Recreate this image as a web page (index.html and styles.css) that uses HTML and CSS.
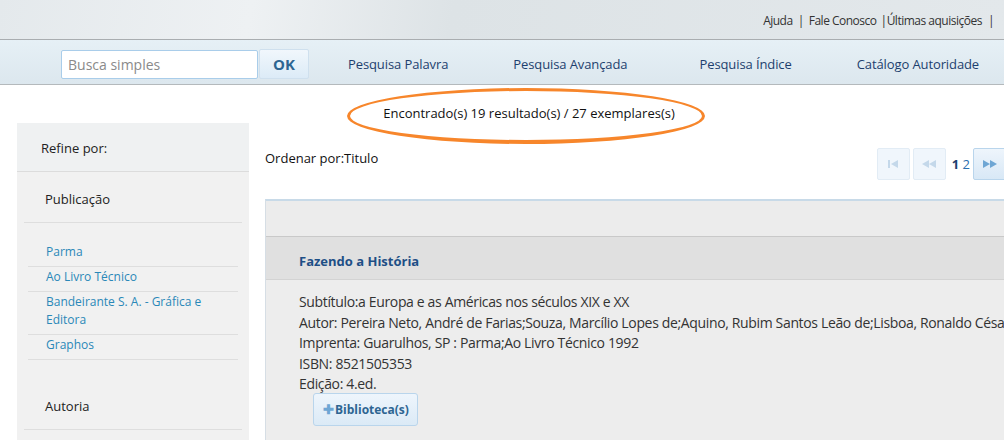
FILE: index.html
```html
<!DOCTYPE html>
<html lang="pt-BR">
<head>
<meta charset="utf-8">
<title>Resultado da pesquisa</title>
<link rel="stylesheet" href="styles.css">
</head>
<body>
<header class="topbar">
  <nav class="toplinks">
    <a href="#">Ajuda</a><span class="sep">|</span><a href="#">Fale Conosco</a><span class="sep tight">|</span><a href="#">Últimas aquisições</a><span class="sep last">|</span>
  </nav>
</header>
<div class="navbar">
  <form class="search">
    <input class="search-input" type="text" placeholder="Busca simples">
    <button class="search-btn" type="button">OK</button>
  </form>
  <a class="navlink nl1" href="#">Pesquisa Palavra</a>
  <a class="navlink nl2" href="#">Pesquisa Avançada</a>
  <a class="navlink nl3" href="#">Pesquisa Índice</a>
  <a class="navlink nl4" href="#">Catálogo Autoridade</a>
</div>
<div class="summary">
  <span class="found">Encontrado(s) 19 resultado(s) / 27 exemplares(s)</span>
  <span class="ellipse"></span>
</div>
<div class="content">
  <aside class="sidebar">
    <div class="refine">Refine por:</div>
    <div class="facet">
      <div class="facet-title">Publicação</div>
      <ul class="facet-list">
        <li><a href="#">Parma</a></li>
        <li><a href="#">Ao Livro Técnico</a></li>
        <li><a href="#">Bandeirante S. A. - Gráfica e Editora</a></li>
        <li><a href="#">Graphos</a></li>
      </ul>
    </div>
    <div class="facet">
      <div class="facet-title">Autoria</div>
    </div>
  </aside>
  <main class="main">
    <div class="toolbar">
      <div class="order">Ordenar por:Titulo</div>
      <div class="pager">
        <span class="pbtn off"><svg width="12" height="10" viewBox="0 0 12 10"><rect x="1" y="1" width="2" height="8" fill="#c4d8ea"/><path d="M11 1 L4 5 L11 9 Z" fill="#c4d8ea"/></svg></span>
        <span class="pbtn off"><svg width="16" height="10" viewBox="0 0 16 10"><path d="M8 1 L1 5 L8 9 Z M15 1 L8 5 L15 9 Z" fill="#c4d8ea"/></svg></span>
        <span class="pages"><b>1</b> <a href="#">2</a></span>
        <span class="pbtn on"><svg width="16" height="10" viewBox="0 0 16 10"><path d="M1 1 L8 5 L1 9 Z M8 1 L15 5 L8 9 Z" fill="#6ea6d4"/></svg></span>
      </div>
    </div>
    <section class="results">
      <div class="results-head"></div>
      <article class="record">
        <h3 class="record-title">Fazendo a História</h3>
        <div class="record-body">
          <p>Subtítulo:a Europa e as Américas nos séculos XIX e XX</p>
          <p>Autor: Pereira Neto, André de Farias;Souza, Marcílio Lopes de;Aquino, Rubim Santos Leão de;Lisboa, Ronaldo César</p>
          <p>Imprenta: Guarulhos, SP : Parma;Ao Livro Técnico 1992</p>
          <p>ISBN: 8521505353</p>
          <p>Edição: 4.ed.</p>
          <button class="lib-btn" type="button"><span class="plus">✚</span>Biblioteca(s)</button>
        </div>
      </article>
    </section>
  </main>
</div>
</body>
</html>
```

FILE: styles.css
```css
* { box-sizing: border-box; }
html, body { margin: 0; padding: 0; }
body {
  font-family: "Open Sans", "Noto Sans", sans-serif;
  color: #222;
  background: #fff;
  width: 1004px;
  height: 440px;
  overflow: hidden;
}
a { text-decoration: none; }

.topbar {
  height: 40px;
  background: linear-gradient(100deg, #e4e9ec 0%, #eef1f3 25%, #dde3e6 45%, #e3e8eb 100%);
  border-bottom: 1px solid #a9adb0;
  display: flex;
  justify-content: flex-end;
  align-items: center;
  padding-right: 10px;
}
.toplinks {
  font-size: 12px;
  letter-spacing: -0.5px;
  color: #333;
  display: flex;
  align-items: center;
  padding-top: 2px;
}
.toplinks a { color: #333; }
.toplinks .sep { margin: 0 5px; }
.toplinks .sep.tight { margin: 0 0 0 4px; }
.toplinks .sep.last { margin: 0 0 0 6px; }

.navbar {
  height: 45px;
  background: linear-gradient(#e6f0f6, #dce7ee);
  border-bottom: 1px solid #b4b9bc;
  display: flex;
  align-items: center;
  padding-left: 61px;
  padding-top: 4px;
}
.search { display: flex; align-items: center; }
.search-input {
  width: 197px;
  height: 29px;
  border: 1px solid #a9cdea;
  border-radius: 2px;
  background: #fff;
  font-family: inherit;
  font-size: 14px;
  padding: 0 6px;
  color: #333;
}
.search-input::placeholder { color: #8a8a8a; }
.search-btn {
  width: 50px;
  height: 30px;
  margin-left: 1px;
  border: 1px solid #cfe0ee;
  border-radius: 2px;
  background: linear-gradient(#f1f7fc, #dcebf7);
  color: #2d6592;
  font-family: inherit;
  font-weight: bold;
  font-size: 15px;
  padding: 0;
}
.navlink {
  color: #1d3f6e;
  font-size: 13px;
  letter-spacing: -0.1px;
}
.nl1 { margin-left: 39px; }
.nl2 { margin-left: 65px; }
.nl3 { margin-left: 72px; }
.nl4 { margin-left: 65px; }

.summary {
  position: relative;
  height: 38px;
  display: flex;
  justify-content: center;
  padding-top: 19px;
}
.found {
  font-size: 13px;
  color: #111;
  line-height: 18px;
  margin-left: 54px;
}
.ellipse {
  position: absolute;
  left: 347px;
  top: 3px;
  width: 358px;
  height: 56px;
  border: 3px solid #f7862b;
  border-bottom-width: 4px;
  border-radius: 50%;
  pointer-events: none;
}

.content {
  display: flex;
  gap: 16px;
  padding-left: 17px;
}
.sidebar {
  width: 232px;
  flex: none;
  height: 330px;
  background: #f1f1f1;
}
.refine {
  height: 49px;
  background: #eff1f2;
  border-bottom: 1px solid #dcdcdc;
  font-size: 13px;
  color: #222;
  padding: 16px 0 0 24px;
}
.facet { padding: 0 7px; }
.facet-title {
  font-size: 13px;
  color: #222;
  line-height: 18px;
  padding: 18px 0 0 21px;
  height: 51px;
  border-bottom: 1px solid #dedede;
}
.facet-list {
  list-style: none;
  margin: 19px 4px 0;
  padding: 0 0 19px;
}
.facet-list li {
  border-bottom: 1px solid #dedede;
  padding: 1px 0 5px 18px;
  font-size: 12px;
  line-height: 18px;
}
.facet-list a { color: #2a88b8; }

.main {
  flex: 1;
  min-width: 0;
}
.toolbar {
  display: flex;
  justify-content: space-between;
  align-items: flex-start;
  height: 76px;
  padding-top: 25px;
}
.order {
  font-size: 13px;
  color: #111;
  padding-top: 1px;
}
.pager {
  display: flex;
  align-items: center;
  gap: 3px;
  margin-right: -2px;
}
.pbtn {
  width: 33px;
  height: 32px;
  display: flex;
  align-items: center;
  justify-content: center;
  border: 1px solid #e2ecf5;
  border-radius: 2px;
  background: #f0f6fc;
}
.pbtn.on {
  border-color: #b9d5ec;
  background: linear-gradient(#eef5fc, #d8e8f6);
}
.pages {
  font-size: 13px;
  margin: 0 0 0 3px;
  color: #1d3f6e;
}
.pages b { color: #1d3f6e; }
.pages a { color: #2a6fb0; }

.results {
  margin-right: -20px;
  border-top: 2px solid #c8dae8;
  border-left: 1px solid #d6dee5;
  background: #ededed;
  height: 250px;
}
.results-head {
  height: 35px;
  background: #ececec;
}
.record-title {
  margin: 0;
  height: 44px;
  background: #e0e0e0;
  border-top: 1px solid #c9c9c9;
  border-bottom: 1px solid #d3d3d3;
  font-size: 13px;
  font-weight: bold;
  color: #1e4f86;
  padding: 15px 0 0 33px;
}
.record-body {
  padding: 12px 0 0 33px;
  font-size: 14px;
  letter-spacing: -0.35px;
  color: #333;
  white-space: nowrap;
}
.record-body p {
  margin: 0;
  line-height: 20.5px;
}
.lib-btn {
  margin: -2px 0 0 14px;
  height: 33px;
  padding: 0 8px 0 9px;
  border: 1px solid #b9d5ec;
  border-radius: 3px;
  background: linear-gradient(#eef5fc, #dbeaf6);
  color: #2d6592;
  font-family: inherit;
  font-size: 12px;
  letter-spacing: 0;
  font-weight: bold;
  display: inline-flex;
  align-items: center;
}
.plus { color: #6ea6d4; font-size: 13px; margin-right: 1px; }
```
